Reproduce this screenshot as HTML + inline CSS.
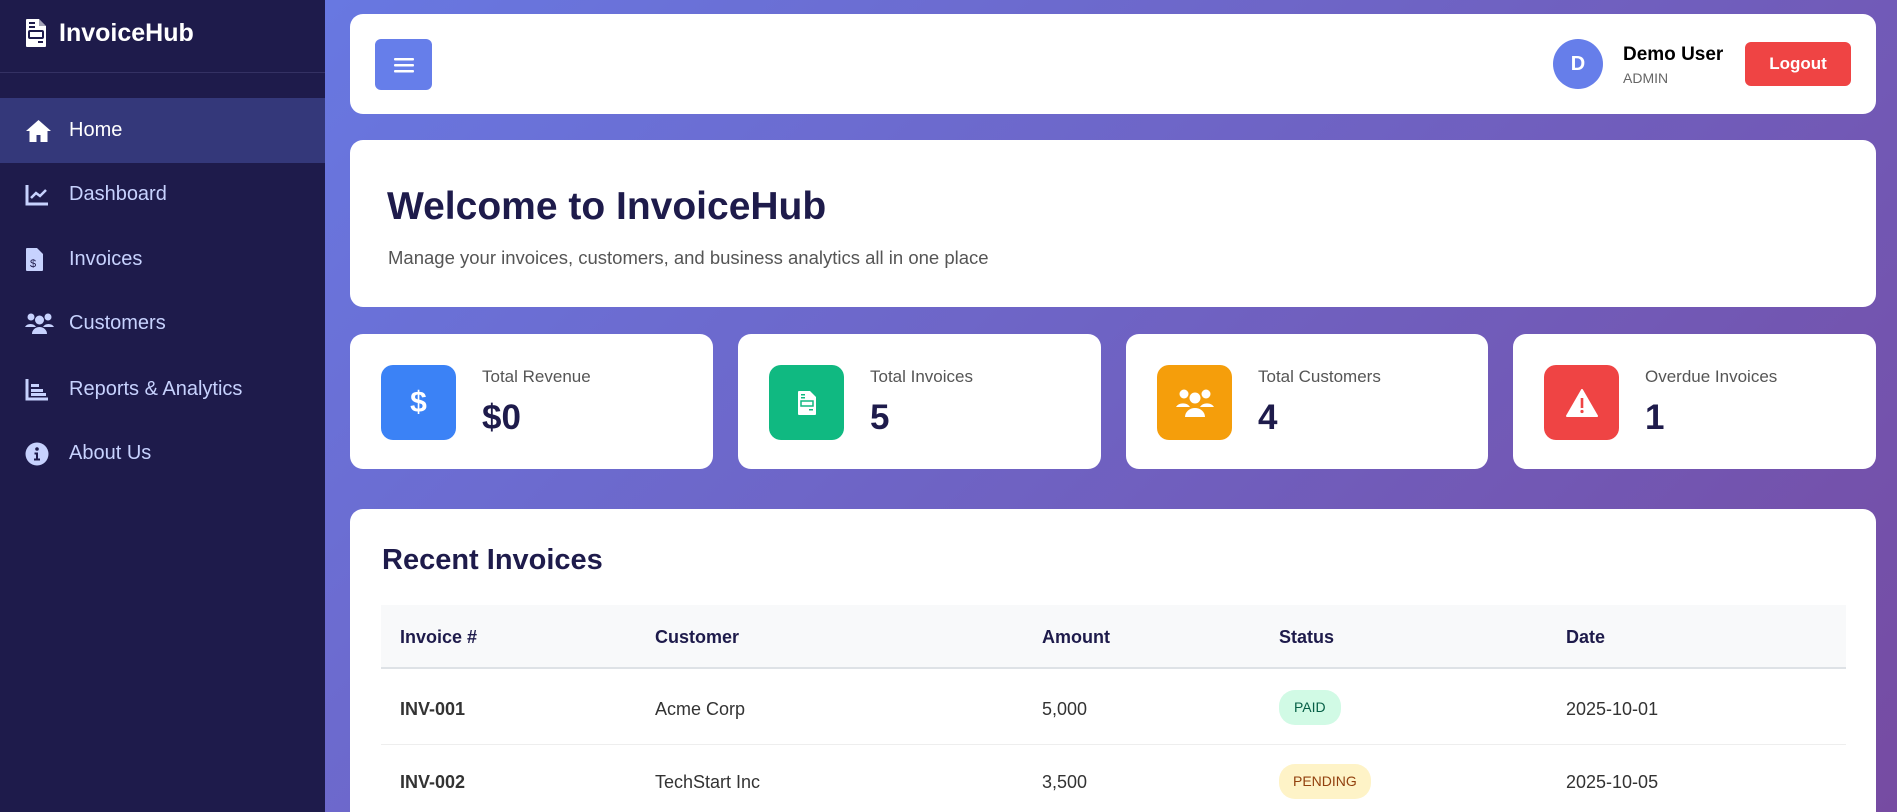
<!DOCTYPE html>
<html><head><meta charset="utf-8"><style>
*{box-sizing:border-box;margin:0;padding:0}
html{width:1897px;height:812px;overflow:hidden}
body{width:1897px;height:812px;overflow:hidden;font-family:"Liberation Sans",sans-serif;background:linear-gradient(135deg,#667eea 0%,#764ba2 100%);position:relative}
.sb{position:absolute;left:0;top:0;width:325px;height:812px;background:#1e1b4b}
.logo{position:absolute;left:25px;top:18px;color:#fff;font-weight:bold;font-size:25px;display:flex;align-items:center;gap:12px}
.div{position:absolute;left:0;top:72px;width:325px;height:1px;background:#343163}
.item{position:absolute;left:0;width:325px;height:65px;display:flex;align-items:center;color:#c7d2fe;font-size:20px}
.item svg{position:absolute;left:25px}
.item span{position:absolute;left:69px}
.item.act{background:#34387a;color:#fff}
.card{position:absolute;background:#fff;border-radius:13px}
.stat .ic{position:absolute;left:31px;top:31px;width:75px;height:75px;border-radius:12px;display:flex;align-items:center;justify-content:center}
.stat .lb{position:absolute;left:132px;top:33px;font-size:17px;color:#555}
.stat .vl{position:absolute;left:132px;top:64px;font-size:35px;font-weight:bold;color:#1e1b4b}
.th,.td{position:absolute;font-size:18px}
.th{font-weight:bold;color:#1e1b4b;top:627px}
.td{color:#333}
.badge{position:absolute;border-radius:16px;font-size:14px;height:35px;line-height:35px;padding:0 14px}
</style></head><body>
<div class="sb">
 <div class="logo"><svg width="22" height="30" viewBox="0 0 22 30"><path d="M2 1h12l7 7v20a1 1 0 0 1-1 1H2a1 1 0 0 1-1-1V2a1 1 0 0 1 1-1z" fill="#fff"/><path d="M14 1v7h7" fill="#1e1b4b" opacity=".4"/><rect x="4" y="4" width="6" height="2" fill="#1e1b4b"/><rect x="4" y="8" width="6" height="2" fill="#1e1b4b"/><rect x="4" y="13" width="14" height="7" rx="1" fill="none" stroke="#1e1b4b" stroke-width="2"/><rect x="13" y="23" width="5" height="2" fill="#1e1b4b"/></svg>InvoiceHub</div>
 <div class="div"></div>
 <div class="item act" style="top:98px"><svg width="27" height="24" viewBox="0 0 27 24"><path d="M13.5 1L1 12h3.5v11h7v-7h4v7h7V12H26z" fill="#fff"/></svg><span>Home</span></div>
 <div class="item" style="top:162px"><svg width="24" height="22" viewBox="0 0 24 22"><path d="M2 1v19h21" stroke="#c7d2fe" stroke-width="3" fill="none"/><path d="M6 14l5-5 4 3 6-6" stroke="#c7d2fe" stroke-width="2.5" fill="none"/></svg><span>Dashboard</span></div>
 <div class="item" style="top:227px"><svg width="19" height="25" viewBox="0 0 19 25"><path d="M2 1h10l6 6v16a1 1 0 0 1-1 1H2a1 1 0 0 1-1-1V2a1 1 0 0 1 1-1z" fill="#c7d2fe"/><text x="5" y="20" font-size="11" font-family="Liberation Sans" fill="#1e1b4b">$</text></svg><span>Invoices</span></div>
 <div class="item" style="top:291px"><svg width="29" height="24" viewBox="0 0 29 24"><circle cx="6" cy="5" r="3.5" fill="#c7d2fe"/><circle cx="23" cy="5" r="3.5" fill="#c7d2fe"/><circle cx="14.5" cy="8" r="4.5" fill="#c7d2fe"/><path d="M0 15a6 5 0 0 1 11 0zM18 15a6 5 0 0 1 11 0zM7 22a7.5 7 0 0 1 15 0z" fill="#c7d2fe"/></svg><span>Customers</span></div>
 <div class="item" style="top:357px"><svg width="24" height="22" viewBox="0 0 24 22"><path d="M2 0v20h21" stroke="#c7d2fe" stroke-width="3" fill="none"/><rect x="6" y="5" width="8" height="3" fill="#c7d2fe"/><rect x="6" y="10" width="12" height="3" fill="#c7d2fe"/><rect x="6" y="14" width="15" height="3" fill="#c7d2fe"/></svg><span>Reports &amp; Analytics</span></div>
 <div class="item" style="top:421px"><svg width="24" height="24" viewBox="0 0 24 24"><circle cx="12" cy="12" r="11.5" fill="#c7d2fe"/><circle cx="12" cy="7" r="1.8" fill="#1e1b4b"/><path d="M9.5 10.5h3.5v6h2v2h-6v-2h2v-4h-1.5z" fill="#1e1b4b"/></svg><span>About Us</span></div>
</div>

<div class="card" style="left:350px;top:14px;width:1526px;height:100px">
 <div style="position:absolute;left:25px;top:25px;width:57px;height:51px;background:#667eea;border-radius:6px;display:flex;align-items:center;justify-content:center"><svg width="20" height="16"><rect y="1" width="20" height="2.5" rx="1" fill="#fff"/><rect y="7" width="20" height="2.5" rx="1" fill="#fff"/><rect y="13" width="20" height="2.5" rx="1" fill="#fff"/></svg></div>
 <div style="position:absolute;left:1203px;top:25px;width:50px;height:50px;border-radius:50%;background:#667eea;color:#fff;font-weight:bold;font-size:20px;text-align:center;line-height:50px">D</div>
 <div style="position:absolute;left:1273px;top:30px;font-weight:bold;font-size:19px;color:#000">Demo User</div>
 <div style="position:absolute;left:1273px;top:56px;font-size:14px;color:#666">ADMIN</div>
 <div style="position:absolute;left:1395px;top:28px;width:106px;height:44px;background:#ef4444;border-radius:6px;color:#fff;font-weight:bold;font-size:17px;text-align:center;line-height:44px">Logout</div>
</div>

<div class="card" style="left:350px;top:140px;width:1526px;height:167px">
 <div style="position:absolute;left:37px;top:45px;font-size:39px;font-weight:bold;color:#1e1b4b">Welcome to InvoiceHub</div>
 <div style="position:absolute;left:38px;top:107px;font-size:18.5px;color:#555">Manage your invoices, customers, and business analytics all in one place</div>
</div>

<div class="card stat" style="left:350px;top:334px;width:363px;height:135px"><div class="ic" style="background:#3b82f6"><span style="color:#fff;font-size:30px;font-weight:bold">$</span></div><div class="lb">Total Revenue</div><div class="vl">$0</div></div>
<div class="card stat" style="left:738px;top:334px;width:363px;height:135px"><div class="ic" style="background:#10b981"><svg width="18" height="24" viewBox="0 0 18 24"><path d="M1 0h11l6 6v17a1 1 0 0 1-1 1H1a1 1 0 0 1-1-1V1a1 1 0 0 1 1-1z" fill="#fff"/><rect x="3" y="3" width="4" height="1.5" fill="#10b981"/><rect x="3" y="6" width="4" height="1.5" fill="#10b981"/><rect x="3" y="10" width="12" height="5" fill="none" stroke="#10b981" stroke-width="1.5"/><rect x="11" y="18" width="4" height="1.5" fill="#10b981"/></svg></div><div class="lb">Total Invoices</div><div class="vl">5</div></div>
<div class="card stat" style="left:1126px;top:334px;width:362px;height:135px"><div class="ic" style="background:#f59e0b"><svg width="38" height="30" viewBox="0 0 38 30"><circle cx="8" cy="6" r="4.5" fill="#fff"/><circle cx="30" cy="6" r="4.5" fill="#fff"/><circle cx="19" cy="10" r="5.5" fill="#fff"/><path d="M0 19a8 7 0 0 1 14 0zM24 19a8 7 0 0 1 14 0zM9 29a10 9 0 0 1 20 0z" fill="#fff"/></svg></div><div class="lb">Total Customers</div><div class="vl">4</div></div>
<div class="card stat" style="left:1513px;top:334px;width:363px;height:135px"><div class="ic" style="background:#ef4444"><svg width="32" height="28" viewBox="0 0 32 28"><path d="M16 1L31 27H1z" fill="#fff" stroke="#fff" stroke-linejoin="round" stroke-width="2"/><rect x="14.7" y="9" width="2.6" height="10" fill="#ef4444"/><circle cx="16" cy="22.5" r="1.6" fill="#ef4444"/></svg></div><div class="lb">Overdue Invoices</div><div class="vl">1</div></div>

<div class="card" style="left:350px;top:509px;width:1526px;height:303px;border-bottom-left-radius:0;border-bottom-right-radius:0"></div>
<div style="position:absolute;left:382px;top:544px;font-size:29px;font-weight:bold;color:#1e1b4b">Recent Invoices</div>
<div style="position:absolute;left:381px;top:605px;width:1465px;height:64px;background:#f8f9fa;border-bottom:2px solid #dee2e6"></div>
<div class="th" style="left:400px">Invoice #</div><div class="th" style="left:655px">Customer</div><div class="th" style="left:1042px">Amount</div><div class="th" style="left:1279px">Status</div><div class="th" style="left:1566px">Date</div>
<div style="position:absolute;left:381px;top:744px;width:1465px;height:1px;background:#eee"></div>
<div class="td" style="left:400px;top:699px;font-weight:bold">INV-001</div><div class="td" style="left:655px;top:699px">Acme Corp</div><div class="td" style="left:1042px;top:699px">5,000</div><div class="badge" style="left:1279px;top:690px;background:#d1fae5;color:#065f46;padding:0 15px">PAID</div><div class="td" style="left:1566px;top:699px">2025-10-01</div>
<div class="td" style="left:400px;top:772px;font-weight:bold">INV-002</div><div class="td" style="left:655px;top:772px">TechStart Inc</div><div class="td" style="left:1042px;top:772px">3,500</div><div class="badge" style="left:1279px;top:764px;background:#fef3c7;color:#92400e">PENDING</div><div class="td" style="left:1566px;top:772px">2025-10-05</div>
</body></html>
